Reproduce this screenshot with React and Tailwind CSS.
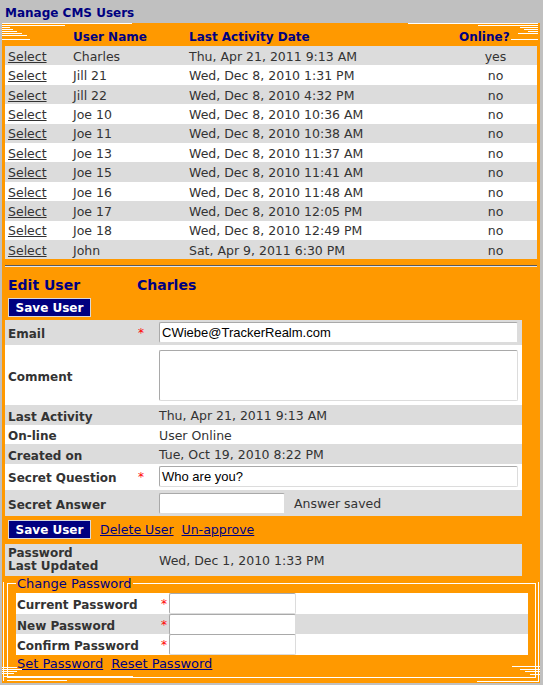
import React from "react";

const users = [
  ["Charles", "Thu, Apr 21, 2011 9:13 AM", "yes"],
  ["Jill 21", "Wed, Dec 8, 2010 1:31 PM", "no"],
  ["Jill 22", "Wed, Dec 8, 2010 4:32 PM", "no"],
  ["Joe 10", "Wed, Dec 8, 2010 10:36 AM", "no"],
  ["Joe 11", "Wed, Dec 8, 2010 10:38 AM", "no"],
  ["Joe 13", "Wed, Dec 8, 2010 11:37 AM", "no"],
  ["Joe 15", "Wed, Dec 8, 2010 11:41 AM", "no"],
  ["Joe 16", "Wed, Dec 8, 2010 11:48 AM", "no"],
  ["Joe 17", "Wed, Dec 8, 2010 12:05 PM", "no"],
  ["Joe 18", "Wed, Dec 8, 2010 12:49 PM", "no"],
  ["John", "Sat, Apr 9, 2011 6:30 PM", "no"],
];

// staircase lines that fake the rounded corners of the panel
const cornerLines = [
  "top-0 left-0 w-[130px]",
  "top-[2px] left-0 w-[63px]",
  "top-[4px] left-0 w-[8px]",
  "top-[6px] left-0 w-[11px]",
  "top-[8px] left-0 w-[15px]",
  "top-[10px] left-0 w-[20px]",
  "top-[12px] left-0 w-[25px]",
  "top-[16px] left-0 w-[28px]",
  "top-0 right-[2px] w-[130px]",
  "top-[2px] right-[2px] w-[60px]",
  "top-[4px] right-[2px] w-[18px]",
  "top-[6px] right-[2px] w-[14px]",
  "top-[8px] right-[2px] w-[10px]",
  "top-[10px] right-[2px] w-[20px]",
  "top-[16px] right-[2px] w-[27px]",
  "top-[644px] left-0 w-[15px]",
  "top-[646px] left-0 w-[20px]",
  "top-[648px] left-0 w-[15px]",
  "top-[650px] left-0 w-[12px]",
  "top-[653px] left-[1px] w-[130px]",
  "top-[657px] left-[5px] w-[60px]",
  "top-[643px] right-0 w-[28px]",
  "top-[646px] right-0 w-[20px]",
  "top-[648px] right-0 w-[15px]",
  "top-[651px] right-0 w-[10px]",
  "top-[658px] right-[1px] w-[62px]",
];

const Input = ({ value = "", className = "" }) => (
  <div
    className={`h-[21px] bg-white border border-[#a9a9a9] border-b-[#dcdcdc] border-r-[#dcdcdc] rounded-[2px] px-[2px] flex items-center text-[13px] text-black ${className}`}
    style={{ fontFamily: '"Liberation Sans", Arial, sans-serif' }}
  >
    {value}
  </div>
);

const SaveButton = () => (
  <button className="w-[83px] h-[19px] bg-[#000080] border border-[#d8d8d8] text-white font-bold text-[12px] leading-none pt-px">
    Save User
  </button>
);

const Star = () => <span className="text-[#ff0000] text-[12px]">*</span>;

const DetailRow = ({ label, gray, star, height, children }) => (
  <div className={`flex items-center ${height} ${gray ? "bg-[#dcdcdc]" : "bg-white"}`}>
    <div className="w-[130px] pl-[3px] pt-[3px] font-bold text-[12px] text-[#333]">{label}</div>
    <div className="w-[21px] pl-[3px] self-start pt-[7px] leading-none">{star && <Star />}</div>
    <div className="flex-1 pl-[3px] pr-[4px] flex items-center">{children}</div>
  </div>
);

const PwRow = ({ label, gray }) => (
  <div className={`flex items-center h-[20.7px] ${gray ? "bg-[#dcdcdc]" : "bg-white"}`}>
    <div className="w-[143px] pl-[1px] pt-[3px] font-bold text-[12px] text-[#333]">{label}</div>
    <div className="w-[10px] pl-[2px] self-start pt-[5px] leading-none">
      <Star />
    </div>
    <Input className="w-[127px] h-[19px]" />
  </div>
);

export default function App() {
  return (
    <div
      className="w-[543px] h-[685px] bg-[#c0c0c0] flex flex-col text-[12.5px] text-[#333]"
      style={{ fontFamily: '"DejaVu Sans", Verdana, sans-serif' }}
    >
      {/* Title */}
      <div className="h-[23px] pl-[5px] pt-[3px] flex items-center font-bold text-[12px] text-[#000080]">
        Manage CMS Users
      </div>

      {/* Orange panel */}
      <div className="relative ml-[2px] w-[538px] h-[660px] bg-[#ff9900] px-[3px]">
        {cornerLines.map((c, i) => (
          <div key={i} className={`absolute h-px bg-white ${c}`} />
        ))}
        <div className="absolute left-[1px] top-[559px] h-[99px] w-px bg-white" />
        <div className="absolute right-[1px] top-[559px] h-[99px] w-px bg-white" />

        {/* Users grid */}
        <div className="w-[532px] mt-[1px]">
          <div className="flex items-center h-[22px] pt-[3px] font-bold text-[12px] text-[#000080]">
            <div className="w-[65px]" />
            <div className="w-[116px] pl-[3px]">User Name</div>
            <div className="w-[270px] pl-[3px]">Last Activity Date</div>
            <div className="flex-1 pl-[3px]">Online?</div>
          </div>
          {users.map(([name, date, online], i) => (
            <div
              key={name}
              className={`flex items-center h-[19.4px] pt-[3px] ${i % 2 === 0 ? "bg-[#dcdcdc]" : "bg-white"}`}
            >
              <div className="w-[65px] pl-[3px]">
                <a className="underline text-[#333] cursor-pointer">Select</a>
              </div>
              <div className="w-[116px] pl-[3px]">{name}</div>
              <div className="w-[270px] pl-[3px]">{date}</div>
              <div className="flex-1 text-center pr-[2px]">{online}</div>
            </div>
          ))}
        </div>

        <div className="w-[532px] mt-[6px] border-t border-[#5a5a5a] border-b border-b-[#e6e6e6]" />

        {/* Edit user */}
        <div className="flex items-center h-[20px] mt-[6px] pt-[4px] font-bold text-[14px] text-[#000080]">
          <div className="w-[132px] pl-[3px]">Edit User</div>
          <div>Charles</div>
        </div>
        <div className="mt-[5px] ml-[3px] flex">
          <SaveButton />
        </div>

        <div className="w-[517px] mt-[3px]">
          <DetailRow label="Email" gray star height="h-[25px]">
            <Input value="CWiebe@TrackerRealm.com" className="w-full" />
          </DetailRow>
          <DetailRow label="Comment" height="h-[60px]">
            <div className="w-full h-[51px] bg-white border border-[#a9a9a9] border-b-[#dcdcdc] border-r-[#dcdcdc] rounded-[2px]" />
          </DetailRow>
          <DetailRow label="Last Activity" gray height="h-[19.5px]">
            <span className="pt-[3px]">Thu, Apr 21, 2011 9:13 AM</span>
          </DetailRow>
          <DetailRow label="On-line" height="h-[19.5px]">
            <span className="pt-[3px]">User Online</span>
          </DetailRow>
          <DetailRow label="Created on" gray height="h-[19.5px]">
            <span className="pt-[3px]">Tue, Oct 19, 2010 8:22 PM</span>
          </DetailRow>
          <DetailRow label="Secret Question" star height="h-[26px]">
            <Input value="Who are you?" className="w-full" />
          </DetailRow>
          <DetailRow label="Secret Answer" gray height="h-[26.5px]">
            <Input className="w-[126px]" />
            <span className="ml-[9px] pt-[3px]">Answer saved</span>
          </DetailRow>
        </div>

        <div className="flex items-center mt-[3px] ml-[3px]">
          <SaveButton />
          <a className="ml-[9px] pt-[2px] underline text-[#000080] cursor-pointer">Delete User</a>
          <a className="ml-[8px] pt-[2px] underline text-[#000080] cursor-pointer">Un-approve</a>
        </div>

        <div className="flex items-center w-[517px] h-[32px] mt-[4px] bg-[#dcdcdc]">
          <div className="w-[154px] pl-[3px] font-bold text-[12px] leading-[13px]">
            Password
            <br />
            Last Updated
          </div>
          <div className="pt-[2px]">Wed, Dec 1, 2010 1:33 PM</div>
        </div>

        {/* Change password */}
        <fieldset className="ml-[2px] w-[529px] border border-white pl-[8px] pr-[7px] pt-[2px] pb-[7px]">
          <legend className="px-[1px] text-[13px] text-[#000080] leading-[15px]">Change Password</legend>
          <PwRow label="Current Password" />
          <PwRow label="New Password" gray />
          <PwRow label="Confirm Password" />
          <div className="flex items-center h-[15px] pt-[2px] pl-[1px] text-[13px]">
            <a className="underline text-[#000080] cursor-pointer">Set Password</a>
            <a className="ml-[8px] underline text-[#000080] cursor-pointer">Reset Password</a>
          </div>
        </fieldset>
      </div>
    </div>
  );
}
